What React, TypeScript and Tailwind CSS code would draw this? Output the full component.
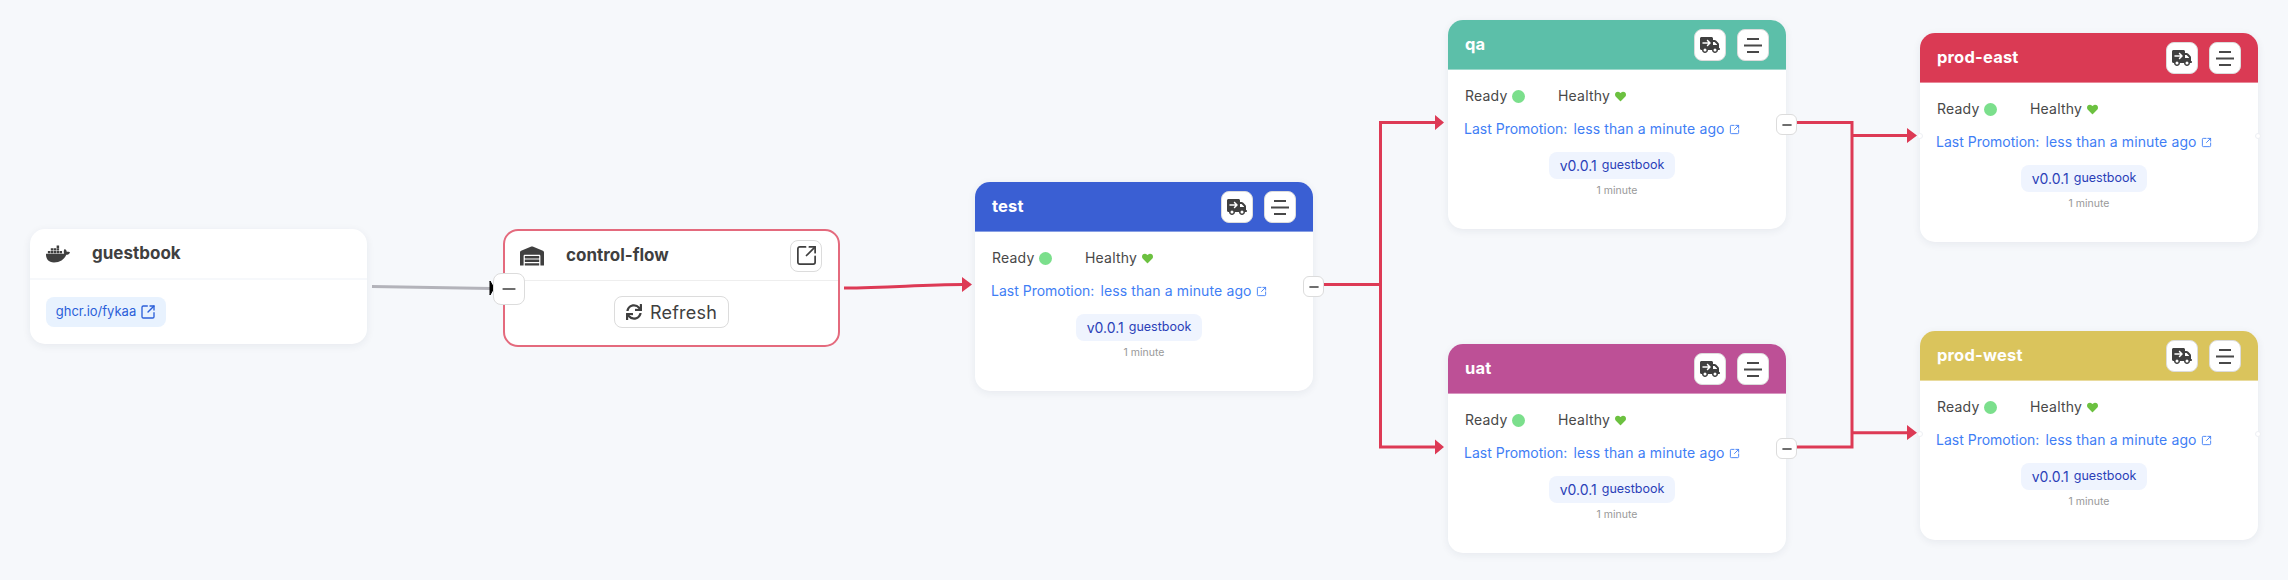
// Promotion flow canvas
import { Minus, SquareArrowOutUpRight } from 'lucide-react';
import { FaDocker, FaHeart, FaSync, FaWarehouse } from 'react-icons/fa';
import { FaTruckArrowRight } from 'react-icons/fa6';

const RED = '#dd3a55';

const stages = [
  { name: 'test', place: 'left-[975px] top-[182px]', head: 'bg-[#3a5fd3]', expander: true, dots: false },
  { name: 'qa', place: 'left-[1448px] top-[20px]', head: 'bg-[#5cbfa9]', expander: true, dots: false },
  { name: 'uat', place: 'left-[1448px] top-[344px]', head: 'bg-[#bd5096]', expander: true, dots: false },
  { name: 'prod-east', place: 'left-[1920px] top-[33px]', head: 'bg-[#da3a54]', expander: false, dots: true },
  { name: 'prod-west', place: 'left-[1920px] top-[331px]', head: 'bg-[#dac45c]', expander: false, dots: true },
];

function MenuLines() {
  return (
    <svg width="20" height="16" viewBox="0 0 20 16" fill="none" stroke="#484848" strokeWidth="2">
      <path d="M4 2h12M1 8.500h18M4 15h12" />
    </svg>
  );
}

function StageCard({ stage }: { stage: (typeof stages)[number] }) {
  return (
    <div className={`absolute ${stage.place} h-[209px] w-[338px] rounded-[15px] bg-white shadow-[0_2px_8px_rgba(30,40,70,0.07)]`}>
      <div className={`${stage.head} flex h-[50px] items-center justify-between rounded-t-[15px] border-b border-white/40 pl-[17px] pr-[17px]`}>
        <span className="text-[16.500px] font-bold tracking-[0.2px] text-white">{stage.name}</span>
        <div className="flex gap-[11px]">
          <div className="flex h-8 w-8 items-center justify-center rounded-lg border border-[#dcdcdc] bg-white text-[#3f3f3f]">
            <FaTruckArrowRight size={20} />
          </div>
          <div className="flex h-8 w-8 items-center justify-center rounded-lg border border-[#dcdcdc] bg-white">
            <MenuLines />
          </div>
        </div>
      </div>
      <div className="flex flex-col px-[17px] pt-4">
        <div className="flex h-5 items-center text-sm text-[#484848]">
          <div className="flex w-[93px] items-center gap-[5px]">
            <span className="tracking-[0.2px]">Ready</span>
            <span className="h-[13px] w-[13px] rounded-full bg-[#7bdf8c]" />
          </div>
          <span className="tracking-[0.2px]">Healthy</span>
          <FaHeart size={11} className="ml-[5px] text-[#6cc140]" />
        </div>
        <div className="-ml-px mt-[13px] flex h-5 items-center text-sm text-[#3f7ef5]">
          <span>Last Promotion:</span>
          <span className="ml-[6px] tracking-[0.12px]">less than a minute ago</span>
          <SquareArrowOutUpRight size={11} strokeWidth={2} className="ml-[4px]" />
        </div>
        <div className="mr-[10px] mt-[13px] flex justify-center">
          <div className="flex h-[27px] w-[126px] items-center justify-center gap-[5px] rounded-lg bg-[#eff4fe] text-[#2b3fb8]">
            <span className="text-sm">v0.0.1</span>
            <span className="text-[12.500px]">guestbook</span>
          </div>
        </div>
        <div className="mt-[5px] text-center text-[10.500px] leading-[14px] text-[#999999]">1 minute</div>
      </div>
      {stage.expander && (
        <div className="absolute left-[328px] top-[94px] flex h-[21px] w-[21px] items-center justify-center rounded-md border border-[#dcdcdc] bg-white text-[#3f3f3f]">
          <Minus size={14} strokeWidth={2.500} />
        </div>
      )}
      {stage.dots && (
        <>
          <div className="absolute -left-[3px] top-[100px] h-[6px] w-[6px] rounded-full border border-[#eef0f4] bg-white" />
          <div className="absolute -right-[3px] top-[100px] h-[6px] w-[6px] rounded-full border border-[#eef0f4] bg-white" />
        </>
      )}
    </div>
  );
}

function Edges() {
  return (
    <svg className="absolute inset-0" width="2288" height="580" fill="none">
      <path d="M372 286.500L491 288.500" stroke="#b3b3ba" strokeWidth="3" />
      <path d="M490 281L494 288L490 295Z" fill="#000000" stroke="#000000" strokeWidth="1" />
      <path d="M844 288C890 288 920 284.500 963 284.500" stroke={RED} strokeWidth="3" />
      <path d="M962 277L972 284.500L962 292Z" fill={RED} />
      <path d="M1323 284.500H1380.500M1435 122.500H1380.500V447H1435" stroke={RED} strokeWidth="3" />
      <path d="M1435 115L1444 122.500L1435 130Z M1435 439.500L1444 447L1435 454.500Z" fill={RED} />
      <path d="M1796 122.500H1852V447H1796M1852 135.500H1908M1852 432.700H1908" stroke={RED} strokeWidth="3" />
      <path d="M1907 128L1917 135.500L1907 143Z M1907 425L1917 432.700L1907 440Z" fill={RED} />
    </svg>
  );
}

export default function App() {
  return (
    <div className="relative h-[580px] w-[2288px] overflow-hidden bg-[#f6f8fb] [font-family:Inter,sans-serif]">
      <Edges />

      {/* image source */}
      <div className="absolute left-[30px] top-[229px] h-[115px] w-[337px] rounded-[15px] bg-white shadow-[0_2px_8px_rgba(30,40,70,0.07)]">
        <div className="flex h-[51px] items-center border-b-2 border-[#f6f8fb] pl-4">
          <FaDocker size={24} className="text-[#3f3f3f]" />
          <span className="ml-[22px] text-[17px] font-bold text-[#3f3f3f]">guestbook</span>
        </div>
        <div className="px-4 pt-[17px]">
          <div className="inline-flex h-[30px] w-[120px] items-center justify-center gap-[4px] rounded-lg bg-[#e8f2fe] text-[13px] text-[#2b5fd9]">
            <span>ghcr.io/fykaa</span>
            <SquareArrowOutUpRight size={16} strokeWidth={2} />
          </div>
        </div>
      </div>

      {/* warehouse */}
      <div className="absolute left-[503px] top-[229px] h-[118px] w-[337px] rounded-[15px] border-2 border-[#e46a7d] bg-white">
        <div className="flex h-[50px] items-center justify-between border-b border-[#eeeeee] pl-[15px] pr-4">
          <div className="flex items-center">
            <FaWarehouse size={24} className="text-[#3f3f3f]" />
            <span className="ml-[22px] text-[17px] font-bold text-[#3f3f3f]">control-flow</span>
          </div>
          <div className="flex h-8 w-8 items-center justify-center rounded-lg border border-[#dcdcdc] text-[#3f3f3f]">
            <SquareArrowOutUpRight size={23} strokeWidth={1.800} />
          </div>
        </div>
        <div className="flex justify-center pt-[15px]">
          <div className="flex h-8 w-[115px] items-center justify-center gap-2 rounded-lg border border-[#dcdcdc] text-[#3f3f3f]">
            <FaSync size={16} />
            <span className="text-[18px] tracking-[0.2px]">Refresh</span>
          </div>
        </div>
        <div className="absolute -left-[12px] top-[42px] flex h-8 w-8 items-center justify-center rounded-lg border border-[#dcdcdc] bg-white text-[#3f3f3f]">
          <Minus size={20} strokeWidth={2} />
        </div>
      </div>

      {stages.map((stage) => (
        <StageCard key={stage.name} stage={stage} />
      ))}
    </div>
  );
}
